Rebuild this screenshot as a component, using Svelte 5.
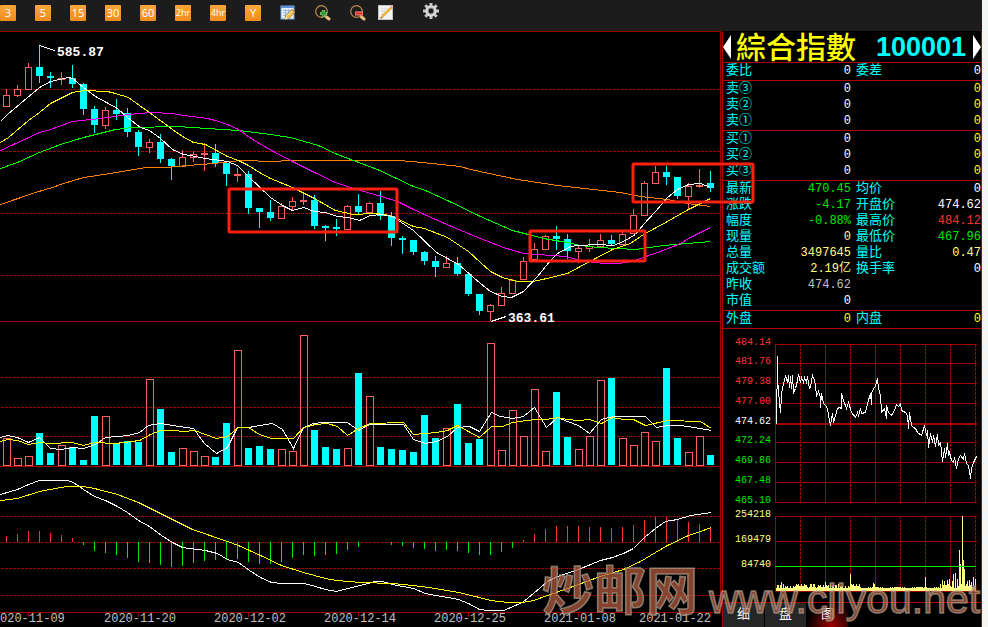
<script>
  const periods = ['3', '5', '15', '30', '60', '2hr', '4hr', 'Y'];

  // rising?, high, body top, body bottom, low, volume top, oscillator end
  const days = [
    [1,89,95,107,107,438,536],[1,85,89,96,97,458,534],[1,63,67,90,90,456,531],[0,45,67,76,83,433,531],
    [0,72,76,78,88,453,533],[1,72,78,80,85,445,535],[0,65,78,84,88,447,538],[0,83,84,109,115,460,545],
    [0,106,109,125,133,416,551],[1,107,110,126,129,416,553],[0,99,110,114,120,444,555],[0,108,113,132,137,441,558],
    [0,130,132,147,156,442,562],[1,139,142,148,153,379,563],[0,134,142,159,163,409,565],[0,158,159,166,180,452,567],
    [1,150,157,167,167,448,566],[1,151,154,158,162,451,563],[1,143,153,155,171,456,561],[0,144,153,163,167,457,560],
    [0,163,163,174,186,423,560],[1,168,174,176,182,350,559],[0,171,174,208,214,448,562],[0,208,208,212,228,446,564],
    [0,200,212,218,221,449,564],[1,203,206,219,219,449,562],[1,197,201,207,210,451,558],[1,193,200,202,205,335,555],
    [0,195,200,226,229,430,556],[0,225,226,228,241,447,555],[0,219,227,229,236,449,554],[1,205,206,230,230,448,550],
    [0,194,206,212,214,373,547],[1,202,203,213,213,396,542],[0,191,203,216,220,447,542],[0,212,216,238,246,449,545],
    [0,236,238,240,254,450,546],[0,240,240,252,255,452,548],[0,251,252,261,265,415,549],[0,256,261,267,277,438,551],
    [1,256,263,268,268,428,550],[0,257,263,274,276,404,551],[0,274,274,294,296,443,553],[0,294,294,311,315,439,555],
    [1,304,305,312,321,343,555],[1,287,293,306,306,450,552],[1,279,280,294,294,410,548],[1,257,261,280,280,436,540],
    [1,243,249,260,260,389,534],[1,235,236,250,250,451,529],[0,226,236,239,250,392,526],[0,234,239,251,259,437,526],
    [1,246,248,252,263,449,526],[1,239,246,249,252,436,527],[1,234,240,247,247,380,527],[0,235,240,244,246,378,528],
    [1,232,234,245,245,438,527],[1,209,215,234,234,445,525],[1,181,183,216,216,432,520],[1,166,172,184,184,441,517],
    [0,166,172,177,185,368,517],[0,177,177,196,199,438,520],[1,183,186,197,210,452,522],[1,169,185,187,188,436,524],
    [0,171,183,188,192,455,527]
  ].map(([up, high, top, bottom, low, vol, osc], i) => ({ up, high, top, bottom, low, vol, osc, x: 6 + 11 * i }));

  const averages = [
    ['#ff8000', '0,204 35,192 52,187 63,183 83,177 110,173 145,167 167,167 187,165 213,163 240,160 252,160 263,161 298,160 397,160 412,161 460,166 470,169 517,179 557,185 620,192 640,196 667,199 687,203 710,206'],
    ['#00ff00', '0,168 17,162 39,152 60,144 83,137 115,129 132,127 177,126 207,128 238,130 263,133 290,137 318,145 337,154 353,160 377,169 413,186 425,190 447,200 480,216 512,230 532,235 543,238 567,242 580,245 598,247 617,248 635,249 663,245 687,243 710,241'],
    ['#ff00ff', '0,150 39,132 50,129 72,121 100,118 128,114 150,112 172,113 183,115 207,118 215,120 227,124 238,129 252,139 273,151 292,161 314,172 335,182 353,188 367,192 381,196 397,201 413,209 435,219 458,229 480,238 503,247 523,253 565,256 580,260 603,263 617,263 627,262 640,258 657,252 678,244 690,237 710,227'],
    ['#ffff00', '0,142 8,137 28,120 39,112 50,103 72,92 83,90 107,91 115,93 128,97 139,105 149,112 172,129 182,136 193,142 205,144 227,156 238,160 248,165 259,172 270,178 292,187 314,198 335,210 353,214 373,213 385,214 392,216 413,226 424,228 447,237 468,251 480,262 490,271 502,277 517,281 532,281 542,279 567,273 578,267 612,249 630,243 643,234 667,221 688,209 710,198'],
    ['#ffffff', '0,121 7,114 39,87 50,81 68,77 72,78 83,87 95,96 117,108 127,117 140,127 149,130 160,138 172,149 183,154 195,156 205,158 227,161 237,165 248,176 270,197 282,205 292,210 303,207 314,211 325,212 337,216 348,217 359,220 370,215 381,214 392,216 413,230 436,252 458,264 480,283 490,291 502,296 511,297 523,291 537,276 550,260 557,253 570,246 577,245 598,244 613,245 623,241 635,234 643,224 655,211 667,197 677,189 688,184 700,183 710,187'],
    ['#ffffff', '0,437 7,435 17,437 28,442 39,437 50,448 61,449 72,447 83,448 95,444 105,437 128,435 139,432 148,425 160,423 172,425 193,428 204,443 216,453 227,447 237,427 248,427 272,423 282,429 293,448 303,427 313,423 322,422 347,422 358,430 369,424 403,424 413,439 425,443 436,441 447,436 457,427 469,426 479,431 491,412 500,416 512,418 523,416 534,407 546,427 557,417 567,421 578,425 589,433 601,419 612,416 645,416 656,427 667,425 680,425 700,428 711,430'],
    ['#ffff00', '0,441 7,439 17,440 28,444 39,442 50,443 72,442 83,445 94,442 115,443 139,440 150,434 160,430 173,430 183,431 194,430 216,438 227,436 238,427 248,427 259,434 271,438 293,438 303,427 315,424 327,423 337,426 347,435 358,428 370,423 403,422 413,434 436,432 447,430 457,425 479,437 491,426 502,426 512,422 534,419 546,419 557,417 567,419 578,420 589,419 601,423 612,417 623,419 633,419 645,425 667,420 700,421 711,428'],
    ['#ffffff', '0,494 17,489 28,484 39,480 67,480 73,482 83,489 94,496 105,500 117,506 127,512 138,520 149,526 161,535 172,542 182,547 205,550 217,553 227,559 238,562 249,570 260,577 271,582 282,583 304,583 315,586 325,589 336,591 347,588 360,585 367,583 375,581 382,581 392,584 413,588 425,593 435,595 448,597 458,599 468,603 479,609 488,610 503,610 522,602 533,593 547,581 557,576 578,569 600,560 612,557 623,553 633,548 644,537 655,528 665,521 677,519 690,515 711,512'],
    ['#ffff00', '0,500 17,498 39,491 55,488 67,486 83,486 94,488 117,494 138,502 160,513 192,529 227,541 238,545 260,555 281,565 303,572 325,578 336,580 360,582 392,583 413,585 435,588 458,592 479,597 490,600 508,602 522,602 533,600 547,595 567,588 578,584 600,576 623,569 640,561 655,552 667,545 688,535 700,531 711,527']
  ];

  const dashedRows = [89, 151, 213, 275, 377, 407, 436, 516, 542, 568, 595];
  const solidRows = [31, 321, 466, 612];
  const dates = [
    ['020-11-09', 0, 28], ['2020-11-20', 104, 138], ['2020-12-02', 214, 248], ['2020-12-14', 324, 358],
    ['2020-12-25', 434, 468], ['2021-01-08', 544, 578], ['2021-01-22', 639, 710]
  ];

  const quotes = [
    [['委比', '0', 'white', '委差', '0', 'white']],
    [['卖③', '0', 'white', '', '0', 'yellow'], ['卖②', '0', 'white', '', '0', 'yellow'], ['卖①', '0', 'white', '', '0', 'yellow']],
    [['买①', '0', 'white', '', '0', 'yellow'], ['买②', '0', 'white', '', '0', 'yellow'], ['买③', '0', 'white', '', '0', 'yellow']],
    [
      ['最新', '470.45', 'green', '均价', '0', 'white'],
      ['涨跌', '-4.17', 'green', '开盘价', '474.62', 'white'],
      ['幅度', '-0.88%', 'green', '最高价', '484.12', 'red'],
      ['现量', '0', 'pale', '最低价', '467.96', 'green'],
      ['总量', '3497645', 'pale', '量比', '0.47', 'pale'],
      ['成交额', '2.19亿', 'pale', '换手率', '0', 'white'],
      ['昨收', '474.62', 'grey', '', '', 'white'],
      ['市值', '0', 'white', '', '', 'white']
    ],
    [['外盘', '0', 'yellow', '内盘', '0', 'yellow']]
  ];

  const scale = [
    ['484.14', 345, '#ff3232'], ['481.76', 364, '#ff3232'], ['479.38', 384, '#ff3232'], ['477.00', 404, '#ff3232'],
    ['474.62', 424, '#ffffff'], ['472.24', 443, '#00e600'], ['469.86', 463, '#00e600'], ['467.48', 483, '#00e600'],
    ['465.10', 503, '#00e600'], ['254218', 517, '#ffff80'], ['169479', 542, '#ffff80'], ['84740', 567, '#ffff80']
  ];
  const intradayRows = [344, 363, 383, 403, 442, 462, 482, 502, 516, 541];

  // intraday ticks in thirds of a unit from (718, 325)
  const ticks = [
    173,297,176,94,178,160,180,195,183,235,186,260,188,210,191,185,197,165,202,150,206,172,209,150,212,185,215,152,
    219,190,222,150,226,200,232,190,236,165,241,148,246,172,250,155,254,172,258,155,263,170,267,152,272,188,277,185,
    282,150,287,165,291,180,295,212,301,198,305,215,307,245,310,205,315,235,320,240,326,250,331,270,337,300,341,265,
    344,292,350,270,356,250,362,245,368,248,370,205,376,225,384,248,391,232,398,262,410,277,416,262,421,270,425,250,
    430,265,440,262,448,235,455,205,458,237,459,203,465,190,470,182,476,160,481,190,487,210,490,262,497,250,503,280,
    505,240,510,262,520,270,530,250,535,237,540,242,546,233,550,255,560,262,567,270,569,308,573,262,578,300,586,305,
    592,310,597,320,610,330,619,300,624,330,626,315,631,365,636,325,641,350,645,330,650,362,656,328,661,360,667,350,
    672,408,679,370,681,395,686,355,689,390,693,380,698,405,704,410,709,395,713,428,719,400,727,390,735,402,739,385,
    745,415,750,420,757,460,760,430,765,410,773,393
  ];
  let intraday = '';
  for (let i = 0; i < ticks.length; i += 2) {
    intraday += `${718 + Math.round(ticks[i] / 3)},${325 + Math.round(ticks[i + 1] / 3)} `;
  }

  const spikes = {
    781: 9, 804: 7, 806: 6, 825: 9, 850: 17, 873: 8, 874: 7, 925: 14, 942: 11, 944: 10, 947: 11, 949: 12, 952: 10, 953: 17,
    955: 18, 957: 12, 959: 41, 960: 27, 962: 75, 963: 31, 964: 22, 967: 10, 969: 11, 971: 9, 973: 14, 975: 12
  };
  const trades = Array.from({ length: 200 }, (_, i) => {
    const x = 776 + i;
    const busy = x < 860 || x > 938 ? 5 : 2;
    return { x, h: spikes[x] ?? 3 + ((i * 7 + ((i * i) % 11)) % busy) };
  });

  let active = $state('图');
</script>

<div class="app">
  <header>
    {#each periods as p}
      <button class="period" class:wide={p.length > 2}>{p}</button>
    {/each}
    <button class="icon" aria-label="Edit table">
      <svg viewBox="0 0 16 16">
        <rect x="1" y="1" width="13" height="13" fill="#e8f1fb" stroke="#7ba7dc" />
        <path d="M1 1h13v2H1z" fill="#5b94d6" />
        <path d="M3 5.500h9M3 8h9M3 10.500h6M5.500 4v8M8.500 4v8M11.500 4v4" stroke="#9ab9dc" fill="none" />
        <path d="M5 14.500l1-4 6-6 3 2.500-6 6.500z" fill="#f3c04d" stroke="#9b6a22" stroke-width=".7" />
        <path d="M6.500 11.500l5.500-5.500" stroke="#fff1a8" /><path d="M5 14.500l.8-3 2.200 2z" fill="#f8dfb4" />
      </svg>
    </button>
    <button class="icon" aria-label="Zoom in">
      <svg viewBox="0 0 16 16">
        <circle cx="6.500" cy="6.500" r="5.800" fill="none" stroke="#bd8a4c" stroke-width="1.200" />
        <path d="M11.500 12l2.500 2" stroke="#e6bd7c" stroke-width="3" stroke-linecap="round" />
        <path d="M8.500 5v7M5 8.500h7" stroke="#8fce80" stroke-width="3.200" />
        <path d="M8.500 5.500v6M5.500 8.500h6" stroke="#31942f" stroke-width="2" />
      </svg>
    </button>
    <button class="icon" aria-label="Zoom out">
      <svg viewBox="0 0 16 16">
        <circle cx="6.500" cy="6.500" r="5.800" fill="none" stroke="#bd8a4c" stroke-width="1.200" />
        <path d="M11.500 12l2.500 2" stroke="#e6bd7c" stroke-width="3" stroke-linecap="round" />
        <path d="M5 8.500h8" stroke="#ff8d84" stroke-width="4" />
        <path d="M5.500 8.500h7" stroke="#e5241b" stroke-width="2" />
      </svg>
    </button>
    <button class="icon draw" aria-label="Draw">
      <svg viewBox="0 0 16 16">
        <rect x=".5" y=".5" width="14" height="14" fill="#f3f3f3" stroke="#c4c4c4" />
        <path d="M3 4h6M3 6.500h4M3 9h3" stroke="#d3d3d3" />
        <path d="M2.500 13.500l1-2.500 9-9 1.500 1.300-9 9z" fill="#f7b52c" stroke="#c98a20" stroke-width=".5" />
        <path d="M12 2l1.500-1.500 2 1.500L14 3.500z" fill="#e9a6a0" /><path d="M2.500 13.500l.7-1.500 1 .9z" fill="#444" />
      </svg>
    </button>
    <button class="icon gear" aria-label="Settings">
      <svg viewBox="0 0 16 16">
        <g stroke="#c6c6c6" stroke-width="3">
          <path d="M8 0v16M0 8h16M2.300 2.300l11.400 11.400M13.700 2.300L2.300 13.700" />
        </g>
        <circle cx="8" cy="8" r="5.700" fill="#dadada" />
        <circle cx="8" cy="8" r="3.400" fill="#9b9b9b" />
        <circle cx="8" cy="8" r="2.400" fill="#1c1c1c" />
      </svg>
    </button>
  </header>

  <main>
    <svg class="chart" viewBox="0 31 722 596" role="img" aria-label="K线图">
      <g class="crisp">
        {#each dashedRows as y}<path class="grid dash" d="M1 {y}.5H720" />{/each}
        {#each solidRows as y}<path class="grid" d="M0 {y}.5H720" />{/each}
        <path class="grid" d="M720.5 31V613" />
        {#each days as d}
          {#if d.up}
            <path d="M{d.x}.5 {d.high}V{d.top}M{d.x}.5 {d.bottom}V{d.low}" class="rise" />
            {#if d.bottom - d.top < 3}
              <rect x={d.x - 3} y={d.top} width="7" height="2" fill="#ff5f5f" />
            {:else}
              <rect x={d.x - 2.5} y={d.top + 0.5} width="6" height={d.bottom - d.top - 1} class="rise" />
            {/if}
            <rect x={d.x - 2.5} y={d.vol + 0.5} width="7" height={465 - d.vol} class="rise" />
          {:else}
            <rect x={d.x} y={d.high} width="1" height={d.low - d.high} fill="#00ffff" />
            <rect x={d.x - 3} y={d.top} width="7" height={d.bottom - d.top} fill="#00ffff" />
            <rect x={d.x - 3} y={d.vol} width="7" height={465 - d.vol} fill="#00ffff" />
          {/if}
          <path d="M{d.x}.5 542V{d.osc}" stroke={d.osc < 542 ? '#ff3232' : '#00e600'} />
        {/each}
        {#each averages as [color, points]}
          <polyline {points} stroke={color} fill="none" transform="translate(.5 .5)" />
        {/each}
        <path d="M39 45.500L55 50.500M491 321.500L506 316.500" stroke="#fff" />
        {#each dates as [, , tick]}<path class="grid" d="M{tick}.5 612V617" />{/each}
      </g>
      <text class="mark" x="57" y="56">585.87</text>
      <text class="mark" x="508" y="322">363.61</text>
      {#each dates as [label, x]}<text class="date" {x} y="622">{label}</text>{/each}
      <g class="boxes">
        <rect x="229" y="189" width="168" height="43" rx="1" />
        <rect x="530" y="231" width="115" height="30" rx="1" />
        <rect x="633" y="164" width="120" height="38" rx="1" />
      </g>
      <g class="watermark">
        <text x="542" y="610" class="site">炒邮网</text>
        <text x="709" y="613" class="url">www.cjiyou.net</text>
      </g>
    </svg>

    <aside>
      <div class="title">
        <button class="arrow left" aria-label="上一个"></button>
        <h1>綜合指數</h1>
        <strong>100001</strong>
        <button class="arrow right" aria-label="下一个"></button>
      </div>

      {#each quotes as rows}
        <table>
          <colgroup><col class="c1" /><col class="c2" /><col class="c3" /><col /></colgroup>
          <tbody>
            {#each rows as [a, av, ac, b, bv, bc]}
              <tr><th>{a}</th><td class={ac}>{av}</td><th>{b}</th><td class={bc}>{bv}</td></tr>
            {/each}
          </tbody>
        </table>
      {/each}

      <svg class="intraday" viewBox="723 329 258 273" role="img" aria-label="分时图">
        {#each scale as [label, y, color]}
          <text x="771" {y} fill={color} text-anchor="end">{label}</text>
        {/each}
        <g class="crisp">
          {#each [775, 825, 875] as x}<path class="grid" d="M{x}.5 344V503M{x}.5 516V592" />{/each}
          {#each [800, 850, 900, 925, 950, 975] as x}<path class="grid dash" d="M{x}.5 344V503M{x}.5 516V592" />{/each}
          {#each intradayRows as y}<path class="grid" d="M775 {y}.5H977" />{/each}
          <rect x="775" y="423" width="202" height="2" fill="#a00000" />
          {#each trades as t}<rect x={t.x} y={591 - t.h} width="1" height={t.h} fill="#ffff80" />{/each}
          <path class="grid" d="M775 591.500H977" />
          <path d="M775 566.500H976" stroke="#00e600" />
          <polyline points={intraday} fill="none" stroke="#fff" transform="translate(.5 .5)" />
        </g>
      </svg>

      <nav>
        {#each ['细', '盘', '图'] as tab}
          <button class:active={active === tab} onclick={() => (active = tab)}>{tab}</button>
        {/each}
      </nav>
    </aside>
  </main>
</div>

<style>
  :global(body) {
    background: #f4f5f5;
  }
  .app {
    margin-right: 6px;
    background: #000;
    color: #fff;
    font-family: 'Liberation Mono', 'Noto Sans CJK SC', monospace;
    font-size: 12px;
  }
  button {
    margin: 0;
    padding: 0;
    border: 0;
    background: none;
    color: inherit;
    font: inherit;
    cursor: pointer;
  }
  header {
    display: flex;
    align-items: flex-start;
    gap: 19px;
    height: 26px;
    padding-top: 5px;
    background: #1c1c1c;
  }
  .period {
    width: 16px;
    height: 16px;
    border-radius: 1px;
    background: linear-gradient(#f9a63a, #f28c1c);
    font: 11px/16px 'Open Sans', sans-serif;
  }
  .period.wide {
    font: 9px/16px 'Open Sans', sans-serif;
  }
  .icon {
    width: 16px;
    height: 16px;
  }
  .icon svg {
    display: block;
    width: 16px;
    height: 16px;
  }
  .draw {
    margin-left: -7px;
  }
  .gear {
    margin: -2px 0 0 10px;
  }
  main {
    display: grid;
    grid-template-columns: minmax(0, 1fr) 260px;
  }
  .chart {
    display: block;
    position: relative;
    z-index: 1;
    width: 100%;
    overflow: visible;
    pointer-events: none;
  }
  .crisp {
    shape-rendering: crispEdges;
  }
  .grid {
    fill: none;
    stroke: #a00000;
  }
  .dash {
    stroke-dasharray: 3 1;
  }
  .rise {
    fill: none;
    stroke: #ff5f5f;
  }
  .mark {
    fill: #fff;
    font-size: 13px;
    font-weight: bold;
  }
  .date {
    fill: #c0c0c0;
  }
  .boxes rect {
    fill: none;
    stroke: #ff2010;
    stroke-width: 3;
  }
  .watermark text {
    fill: #b0593f;
    fill-opacity: 0.75;
    stroke: #a8a090;
    stroke-opacity: 0.7;
    stroke-width: 1.5;
  }
  .site {
    font-family: 'Noto Sans CJK SC', sans-serif;
    font-size: 52px;
    font-weight: bold;
  }
  .url {
    font-family: 'Liberation Sans', sans-serif;
    font-size: 41px;
  }
  aside {
    display: flex;
    flex-direction: column;
    box-sizing: border-box;
    border: solid #b00000;
    border-width: 0 1px;
  }
  .title {
    display: flex;
    align-items: center;
    height: 31px;
  }
  h1 {
    margin: 0 auto 0 5px;
    padding-bottom: 4px;
    color: #ffff00;
    font: 500 30px/30px 'Noto Sans CJK TC', sans-serif;
  }
  strong {
    padding-top: 1px;
    color: #00ffff;
    font: bold 27px/30px 'Liberation Sans', sans-serif;
  }
  .arrow {
    border: solid transparent;
    border-width: 12px 0;
  }
  .left {
    border-right: 8px solid #fff;
  }
  .right {
    margin-left: 7px;
    border-left: 8px solid #fff;
  }
  table {
    table-layout: fixed;
    width: 100%;
    padding-bottom: 1px;
    border-top: 1px solid #b00000;
    border-spacing: 0;
  }
  .c1 {
    width: 46px;
  }
  .c2 {
    width: 82px;
  }
  .c3 {
    width: 47px;
  }
  th,
  td {
    height: 16px;
    padding: 0;
    line-height: 16px;
    white-space: nowrap;
  }
  th {
    padding-left: 3px;
    color: #00ffff;
    font-size: 13px;
    font-weight: normal;
    text-align: left;
  }
  td + th {
    padding-left: 5px;
  }
  td {
    text-align: right;
  }
  .white {
    color: #fff;
  }
  .yellow {
    color: #ffff00;
  }
  .pale {
    color: #ffff80;
  }
  .green {
    color: #00e600;
  }
  .red {
    color: #ff3232;
  }
  .grey {
    color: #c0c0c0;
  }
  .intraday {
    display: block;
    width: 100%;
    border-top: 1px solid #b00000;
    font-size: 10px;
  }
  nav {
    display: flex;
    flex: 1;
    gap: 1px;
    min-height: 24px;
    border-top: 1px solid #b00000;
  }
  nav button {
    width: 41px;
    padding-bottom: 5px;
    background: #262626;
    font: 13px/18px 'Noto Sans CJK SC', sans-serif;
  }
  nav .active {
    background: radial-gradient(circle at 60% 100%, #a00000, #000 75%);
  }
</style>
